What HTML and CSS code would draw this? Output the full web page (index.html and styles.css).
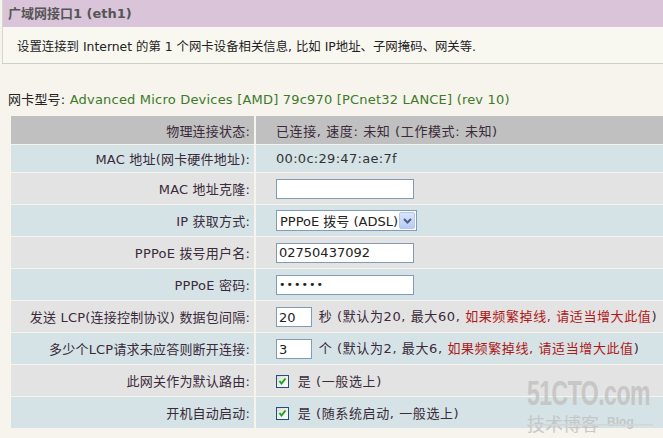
FILE: index.html
```html
<!DOCTYPE html>
<html lang="zh-CN">
<head>
    <meta charset="UTF-8">
    <link rel="stylesheet" href="styles.css">
    <title>广域网接口1 (eth1)</title>
</head>
<body>
    <div class="top">
        <div class="title">广域网接口1 (eth1)</div>
        <div class="desc">设置连接到 Internet 的第 1 个网卡设备相关信息, 比如 IP地址、子网掩码、网关等.</div>
    </div>

    <div class="model">网卡型号: <span class="green">Advanced Micro Devices [AMD] 79c970 [PCnet32 LANCE] (rev 10)</span></div>

    <table class="form">
        <tr class="dark h28">
            <td class="label">物理连接状态:</td>
            <td class="value">已连接, 速度: 未知 (工作模式: 未知)</td>
        </tr>
        <tr class="blue h27">
            <td class="label">MAC 地址(网卡硬件地址):</td>
            <td class="value mac">00:0c:29:47:ae:7f</td>
        </tr>
        <tr class="gray">
            <td class="label">MAC 地址克隆:</td>
            <td class="value"><input class="text" type="text" value=""></td>
        </tr>
        <tr class="blue">
            <td class="label">IP 获取方式:</td>
            <td class="value">
                <div class="select">
                    <span class="select-text">PPPoE 拨号 (ADSL)</span>
                    <span class="select-btn">
                        <svg width="9" height="6" viewBox="0 0 9 6"><polyline points="1,1 4.5,4.5 8,1" fill="none" stroke="#4d6185" stroke-width="2"/></svg>
                    </span>
                </div>
            </td>
        </tr>
        <tr class="gray">
            <td class="label">PPPoE 拨号用户名:</td>
            <td class="value"><input class="text" type="text" value="02750437092"></td>
        </tr>
        <tr class="blue">
            <td class="label">PPPoE 密码:</td>
            <td class="value"><input class="text pass" type="password" value="123456"></td>
        </tr>
        <tr class="gray">
            <td class="label">发送 LCP(连接控制协议) 数据包间隔:</td>
            <td class="value"><input class="text short" type="text" value="20"> 秒 (默认为20, 最大60, <span class="red">如果频繁掉线, 请适当增大此值</span>)</td>
        </tr>
        <tr class="blue">
            <td class="label">多少个LCP请求未应答则断开连接:</td>
            <td class="value"><input class="text short" type="text" value="3"> 个 (默认为2, 最大6, <span class="red">如果频繁掉线, 请适当增大此值</span>)</td>
        </tr>
        <tr class="gray">
            <td class="label">此网关作为默认路由:</td>
            <td class="value"><span class="check"><svg width="9" height="9" viewBox="0 0 9 9"><polyline points="1.5,4 3.5,6.5 7.5,1.5" fill="none" stroke="#21a121" stroke-width="2"/></svg></span> 是 (一般选上)</td>
        </tr>
        <tr class="blue">
            <td class="label">开机自动启动:</td>
            <td class="value"><span class="check"><svg width="9" height="9" viewBox="0 0 9 9"><polyline points="1.5,4 3.5,6.5 7.5,1.5" fill="none" stroke="#21a121" stroke-width="2"/></svg></span> 是 (随系统启动, 一般选上)</td>
        </tr>
    </table>

    <div class="watermark">
        <div class="wm-big">51CTO.com</div>
        <div class="wm-small">技术博客 <span class="wm-blog">Blog</span></div>
    </div>
</body>
</html>
```

FILE: styles.css
```css
body {
    margin: 0;
    background-color: #f6f4ec;
    font-family: 'DejaVu Sans', 'Noto Sans CJK SC', sans-serif;
    font-size: 13px;
    color: #3a2a3a;
    width: 663px;
    height: 438px;
    overflow: hidden;
    position: relative;
}

.top {
    margin-left: 2px;
    border-left: 1px solid #d6d6d0;
    border-bottom: 1px solid #cfcfca;
    background-color: #f8f7f0;
}

.title {
    height: 27px;
    line-height: 27px;
    padding-left: 5px;
    background-color: #dac4da;
    color: #555;
    font-size: 13px;
    font-weight: bold;
}

.desc {
    height: 36px;
    line-height: 40px;
    padding-left: 14px;
    color: #222;
    font-size: 12.4px;
}

.model {
    height: 50px;
    line-height: 72px;
    padding-left: 8px;
    color: #222;
    letter-spacing: 0.2px;
}

.green {
    color: #3c7a2a;
}

.form {
    margin-left: 9px;
    width: 700px;
    border-spacing: 2px 1px;
    margin-top: 1px;
}

.form td {
    height: 31px;
    padding: 0;
    vertical-align: middle;
}

.form tr.h28 td {
    height: 28px;
}

.form tr.h27 td {
    height: 27px;
}

.label {
    width: 239px;
    text-align: right;
    padding-right: 4px !important;
    letter-spacing: 0.2px;
}

.value {
    padding-left: 20px !important;
    letter-spacing: 0.6px;
}

.mac {
    color: #333;
    letter-spacing: 0.3px;
}

.dark {
    background-color: #c0c0c0;
}

.blue {
    background-color: #d5e3e6;
}

.gray {
    background-color: #e3e3e3;
}

.red {
    color: #b01818;
}

.text {
    box-sizing: border-box;
    width: 138px;
    height: 20px;
    border: 1px solid #7f9db9;
    background: #fff;
    padding: 0 2px;
    font-family: 'DejaVu Sans', sans-serif;
    font-size: 13px;
    letter-spacing: 0;
    color: #222;
    vertical-align: middle;
    margin: 0;
}

.pass {
    font-size: 11px;
    letter-spacing: 1px;
}

.short {
    width: 36px;
    margin-right: 2px;
}

.select {
    display: inline-flex;
    align-items: center;
    justify-content: space-between;
    box-sizing: border-box;
    width: 141px;
    height: 21px;
    border: 1px solid #7f9db9;
    background: #fff;
    padding: 0 1px 0 3px;
    vertical-align: middle;
    color: #222;
    letter-spacing: 0;
}

.select-btn {
    display: flex;
    align-items: center;
    justify-content: center;
    width: 16px;
    height: 17px;
    background: linear-gradient(#d9e5fd, #b7cbf6);
    border: 1px solid #b4c7ee;
    box-sizing: border-box;
    border-radius: 2px;
}

.check {
    display: inline-flex;
    align-items: center;
    justify-content: center;
    box-sizing: border-box;
    width: 13px;
    height: 13px;
    border: 1px solid #1c5180;
    background: linear-gradient(135deg, #dcdcd6, #fff);
    vertical-align: middle;
    margin-right: 4px;
    margin-top: -2px;
}

.watermark {
    position: absolute;
    left: 527px;
    top: 376px;
    color: #c4c4c4;
    opacity: 0.9;
    width: 126px;
}

.wm-big {
    font-family: 'Liberation Sans', sans-serif;
    font-size: 23px;
    font-weight: bold;
    line-height: 22px;
    height: 32px;
    letter-spacing: -0.5px;
    transform: scaleY(1.5);
    transform-origin: top;
    border-bottom: 1px solid #d4d4d4;
    margin-bottom: 2px;
}

.wm-small {
    font-family: 'Noto Sans CJK SC', sans-serif;
    font-size: 18px;
    line-height: 22px;
}

.wm-blog {
    font-family: 'Liberation Sans', sans-serif;
    font-size: 12px;
    font-weight: bold;
    vertical-align: 5px;
    margin-left: 4px;
}
```
